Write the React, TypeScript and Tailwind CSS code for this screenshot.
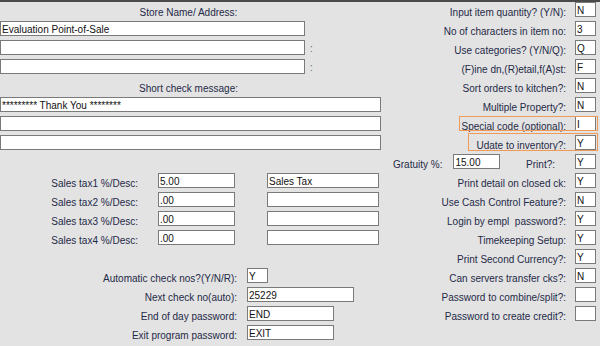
import React from 'react'

const FONT = "font-['Liberation_Sans',Arial,sans-serif]"

function Box({ w, value = '', className = '' }: { w: string; value?: string; className?: string }) {
  return (
    <div
      className={`${w} h-[15px] shrink-0 overflow-hidden whitespace-nowrap border border-[#7a7a7a] bg-white pl-[1px] text-[10px] leading-[15px] text-[#111] ${className}`}
    >
      {value}
    </div>
  )
}

function Label({ text, className = '' }: { text: string; className?: string }) {
  return <div className={`h-[15px] whitespace-pre text-[10px] leading-[21px] text-[#1f2a48] ${className}`}>{text}</div>
}

// right column: yes/no style fields
const flags: { label: string; value: string }[] = [
  { label: 'Input item quantity? (Y/N):', value: 'N' },
  { label: 'No of characters in item no:', value: '3' },
  { label: 'Use categories? (Y/N/Q):', value: 'Q' },
  { label: '(F)ine dn,(R)etail,f(A)st:', value: 'F' },
  { label: 'Sort orders to kitchen?:', value: 'N' },
  { label: 'Multiple Property?:', value: 'N' },
]

const flags2: { label: string; value: string }[] = [
  { label: 'Print detail on closed ck:', value: 'Y' },
  { label: 'Use Cash Control Feature?:', value: 'N' },
  { label: 'Login by empl  password?:', value: 'Y' },
  { label: 'Timekeeping Setup:', value: 'Y' },
  { label: 'Print Second Currency?:', value: 'Y' },
  { label: 'Can servers transfer cks?:', value: 'N' },
  { label: 'Password to combine/split?:', value: '' },
  { label: 'Password to create credit?:', value: '' },
]

const taxes = [
  { pct: '5.00', desc: 'Sales Tax' },
  { pct: '.00', desc: '' },
  { pct: '.00', desc: '' },
  { pct: '.00', desc: '' },
]

const bottom = [
  { label: 'Automatic check nos?(Y/N/R):', value: 'Y', w: 'w-[21px]' },
  { label: 'Next check no(auto):', value: '25229', w: 'w-[107px]' },
  { label: 'End of day password:', value: 'END', w: 'w-[87px]' },
  { label: 'Exit program password:', value: 'EXIT', w: 'w-[87px]' },
]

function FlagRow({ label, value, children }: { label: string; value: string; children?: React.ReactNode }) {
  return (
    <div className="relative flex h-[15px] items-start pr-[4px]">
      {children}
      <Label text={label} className="flex-1 pr-[9px] text-right" />
      <Box w="w-[21px]" value={value} />
    </div>
  )
}

export default function App() {
  return (
    <div className={`${FONT} h-[346px] w-[600px] overflow-hidden border-t-2 border-[#4a4a4a] bg-[#e3e3e3]`}>
      <div className="flex">
        {/* ── Left column ───────────────────────── */}
        <div className="flex w-[386px] shrink-0 flex-col gap-[4px]">
          <Label text="Store Name/ Address:" className="w-[377px] text-center" />
          <Box w="w-[305px]" value="Evaluation Point-of-Sale" />
          <div className="flex h-[15px] items-start">
            <Box w="w-[305px]" />
            <span className="ml-[5px] text-[10px] leading-[18px] text-[#666]">:</span>
          </div>
          <div className="flex h-[15px] items-start">
            <Box w="w-[305px]" />
            <span className="ml-[5px] text-[10px] leading-[18px] text-[#666]">:</span>
          </div>
          <Label text="Short check message:" className="w-[377px] text-center" />
          <Box w="w-[381px]" value="********* Thank You ********" />
          <Box w="w-[381px]" />
          <Box w="w-[381px]" />
          <div className="h-[15px]" />
          {taxes.map((t, i) => (
            <div key={i} className="flex h-[15px] items-start">
              <Label text={`Sales tax${i + 1} %/Desc:`} className="w-[138px] text-right" />
              <Box w="w-[77px]" value={t.pct} className="ml-[20px]" />
              <Box w="w-[112px]" value={t.desc} className="ml-[32px]" />
            </div>
          ))}
          <div className="h-[15px]" />
          {bottom.map(b => (
            <div key={b.label} className="flex h-[15px] items-start">
              <Label text={b.label} className="w-[237px] text-right" />
              <Box w={b.w} value={b.value} className="ml-[10px]" />
            </div>
          ))}
        </div>

        {/* ── Right column ──────────────────────── */}
        <div className="flex flex-1 flex-col gap-[4px]">
          {flags.map(f => (
            <FlagRow key={f.label} label={f.label} value={f.value} />
          ))}
          <FlagRow label="Special code (optional):" value="I">
            <div className="pointer-events-none absolute bottom-0 left-[73px] right-[2px] top-0 border border-[#ef9a56]" />
          </FlagRow>
          <FlagRow label="Udate to inventory?:" value="Y">
            <div className="pointer-events-none absolute bottom-[-1px] left-[82px] right-[2px] top-[-2px] border border-[#ef9a56]" />
          </FlagRow>
          <div className="flex h-[15px] items-start pr-[4px]">
            <Label text="Gratuity %:" className="pl-[7px]" />
            <Box w="w-[47px]" value="15.00" className="ml-[11px]" />
            <Label text="Print?:" className="flex-1 pr-[20px] text-right" />
            <Box w="w-[21px]" value="Y" />
          </div>
          {flags2.map(f => (
            <FlagRow key={f.label} label={f.label} value={f.value} />
          ))}
        </div>
      </div>
    </div>
  )
}
